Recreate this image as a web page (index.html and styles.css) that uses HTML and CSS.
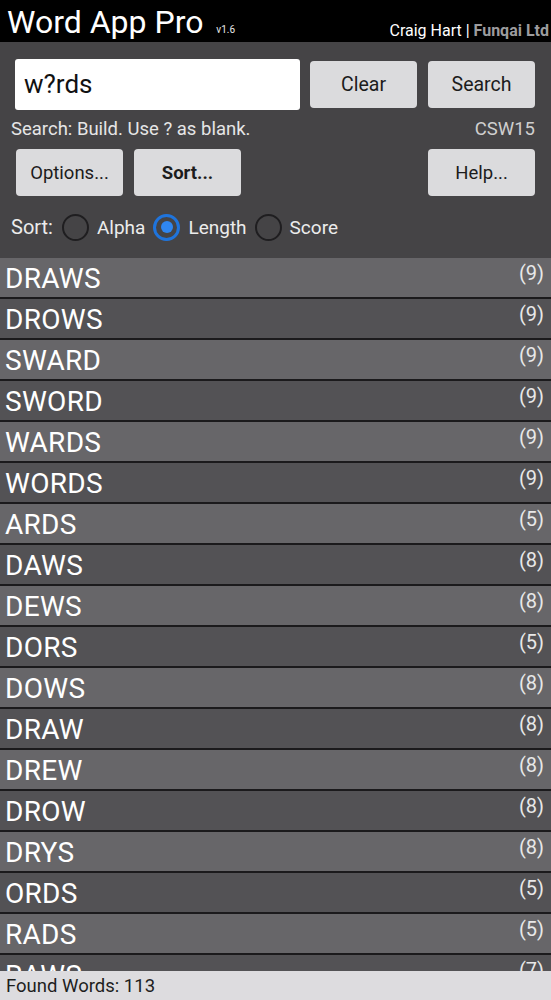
FILE: index.html
```html
<!DOCTYPE html>
<html>
<head>
<meta charset="utf-8">
<link rel="stylesheet" href="styles.css">
</head>
<body>
<div class="app">
  <header class="topbar">
    <div class="title">Word App Pro <span class="ver">v1.6</span></div>
    <div class="credit">Craig Hart | <b>Funqai Ltd</b></div>
  </header>
  <section class="panel">
    <div class="row1">
      <div class="input">w?rds</div>
      <button class="btn big">Clear</button>
      <button class="btn big">Search</button>
    </div>
    <div class="hint">
      <span>Search: Build. Use ? as blank.</span>
      <span class="dict">CSW15</span>
    </div>
    <div class="row2">
      <button class="btn">Options...</button>
      <button class="btn bold">Sort...</button>
      <span class="spacer"></span>
      <button class="btn">Help...</button>
    </div>
    <div class="sortrow">
      <span class="lbl">Sort:</span>
      <span class="radio"></span><span class="opt">Alpha</span>
      <span class="radio on"></span><span class="opt">Length</span>
      <span class="radio"></span><span class="opt">Score</span>
    </div>
  </section>
  <ul class="list">
    <li><span class="w">DRAWS</span><span class="n">(9)</span></li>
    <li><span class="w">DROWS</span><span class="n">(9)</span></li>
    <li><span class="w">SWARD</span><span class="n">(9)</span></li>
    <li><span class="w">SWORD</span><span class="n">(9)</span></li>
    <li><span class="w">WARDS</span><span class="n">(9)</span></li>
    <li><span class="w">WORDS</span><span class="n">(9)</span></li>
    <li><span class="w">ARDS</span><span class="n">(5)</span></li>
    <li><span class="w">DAWS</span><span class="n">(8)</span></li>
    <li><span class="w">DEWS</span><span class="n">(8)</span></li>
    <li><span class="w">DORS</span><span class="n">(5)</span></li>
    <li><span class="w">DOWS</span><span class="n">(8)</span></li>
    <li><span class="w">DRAW</span><span class="n">(8)</span></li>
    <li><span class="w">DREW</span><span class="n">(8)</span></li>
    <li><span class="w">DROW</span><span class="n">(8)</span></li>
    <li><span class="w">DRYS</span><span class="n">(8)</span></li>
    <li><span class="w">ORDS</span><span class="n">(5)</span></li>
    <li><span class="w">RADS</span><span class="n">(5)</span></li>
    <li><span class="w">RAWS</span><span class="n">(7)</span></li>
  </ul>
  <footer class="footer">Found Words: 113</footer>
</div>
</body>
</html>
```
FILE: styles.css
```css
* { box-sizing: border-box; }
html, body { margin: 0; padding: 0; }
body {
  font-family: Roboto, "Noto Sans", sans-serif;
  background: #535255;
}
.app {
  height: 1000px;
  display: flex;
  flex-direction: column;
  overflow: hidden;
  position: relative;
}
.topbar {
  background: #000;
  height: 42px;
  display: flex;
  justify-content: space-between;
  align-items: flex-start;
  padding: 0 2px 0 7px;
  color: #fff;
  flex: none;
}
.title {
  font-size: 32px;
  line-height: 38px;
  margin-top: 3px;
  white-space: nowrap;
}
.ver { font-size: 10px; margin-left: 5px; color: #e8e8e8; }
.credit {
  font-size: 16px;
  line-height: 20px;
  margin-top: 21px;
  white-space: nowrap;
}
.credit b { color: #9c9c9e; }
.panel {
  background: #454446;
  padding: 17px 16px 0 11px;
  height: 216px;
  color: #ececec;
  flex: none;
}
.row1 {
  display: flex;
  align-items: center;
  gap: 10px;
  padding-left: 4px;
}
.input {
  width: 285px;
  height: 51px;
  background: #fff;
  border-radius: 3px;
  color: #111;
  font-size: 26px;
  line-height: 51px;
  padding-left: 9px;
}
.btn {
  font-family: Roboto, "Noto Sans", sans-serif;
  background: #dbdbdd;
  border: none;
  border-radius: 4px;
  width: 107px;
  height: 47px;
  font-size: 18.5px;
  color: #1c1c1c;
  padding: 0;
  margin: 0;
}
.btn.big { font-size: 19.5px; }
.row1 .btn + .btn { margin-left: 1px; }
.bold { font-weight: bold; }
.hint {
  display: flex;
  justify-content: space-between;
  font-size: 18.5px;
  line-height: 20px;
  margin-top: 9px;
  color: #e6e6e6;
}
.hint .dict { color: #cfcfcf; }
.row2 {
  display: flex;
  gap: 11px;
  margin-top: 10px;
  padding-left: 5px;
}
.spacer { flex: 1; }
.sortrow {
  display: flex;
  align-items: center;
  margin-top: 17px;
  font-size: 19px;
  height: 28px;
}
.lbl { margin-right: 9px; font-size: 20px; }
.radio {
  flex: none;
  width: 27px;
  height: 27px;
  border: 2px solid #1f1e20;
  border-radius: 50%;
  margin-right: 8px;
  position: relative;
}
.radio.on {
  border: 3px solid #1f74dc;
}
.radio.on::after {
  content: "";
  position: absolute;
  left: 4.5px; top: 4.5px;
  width: 12px; height: 12px;
  border-radius: 50%;
  background: #2f86f0;
}
.opt { margin-right: 8px; }
.list {
  list-style: none;
  margin: 0;
  padding: 0;
  flex: 1;
  overflow: hidden;
}
.list li {
  height: 41px;
  border-bottom: 2px solid #1b1a1c;
  display: flex;
  justify-content: space-between;
  color: #fff;
  padding: 0 7px 0 5px;
}
.list li:nth-child(odd) { background: #676669; }
.list li:nth-child(even) { background: #535255; }
.w { font-size: 28px; line-height: 42px; letter-spacing: 0.3px; }
.n { font-size: 20px; line-height: 20px; padding-top: 5px; color: #e8e8e8; }
.footer {
  position: absolute;
  left: 0; right: 0; bottom: 0;
  height: 29px;
  background: #dddcdf;
  color: #1e1e1e;
  font-size: 18.5px;
  line-height: 30px;
  padding-left: 6px;
}
```
